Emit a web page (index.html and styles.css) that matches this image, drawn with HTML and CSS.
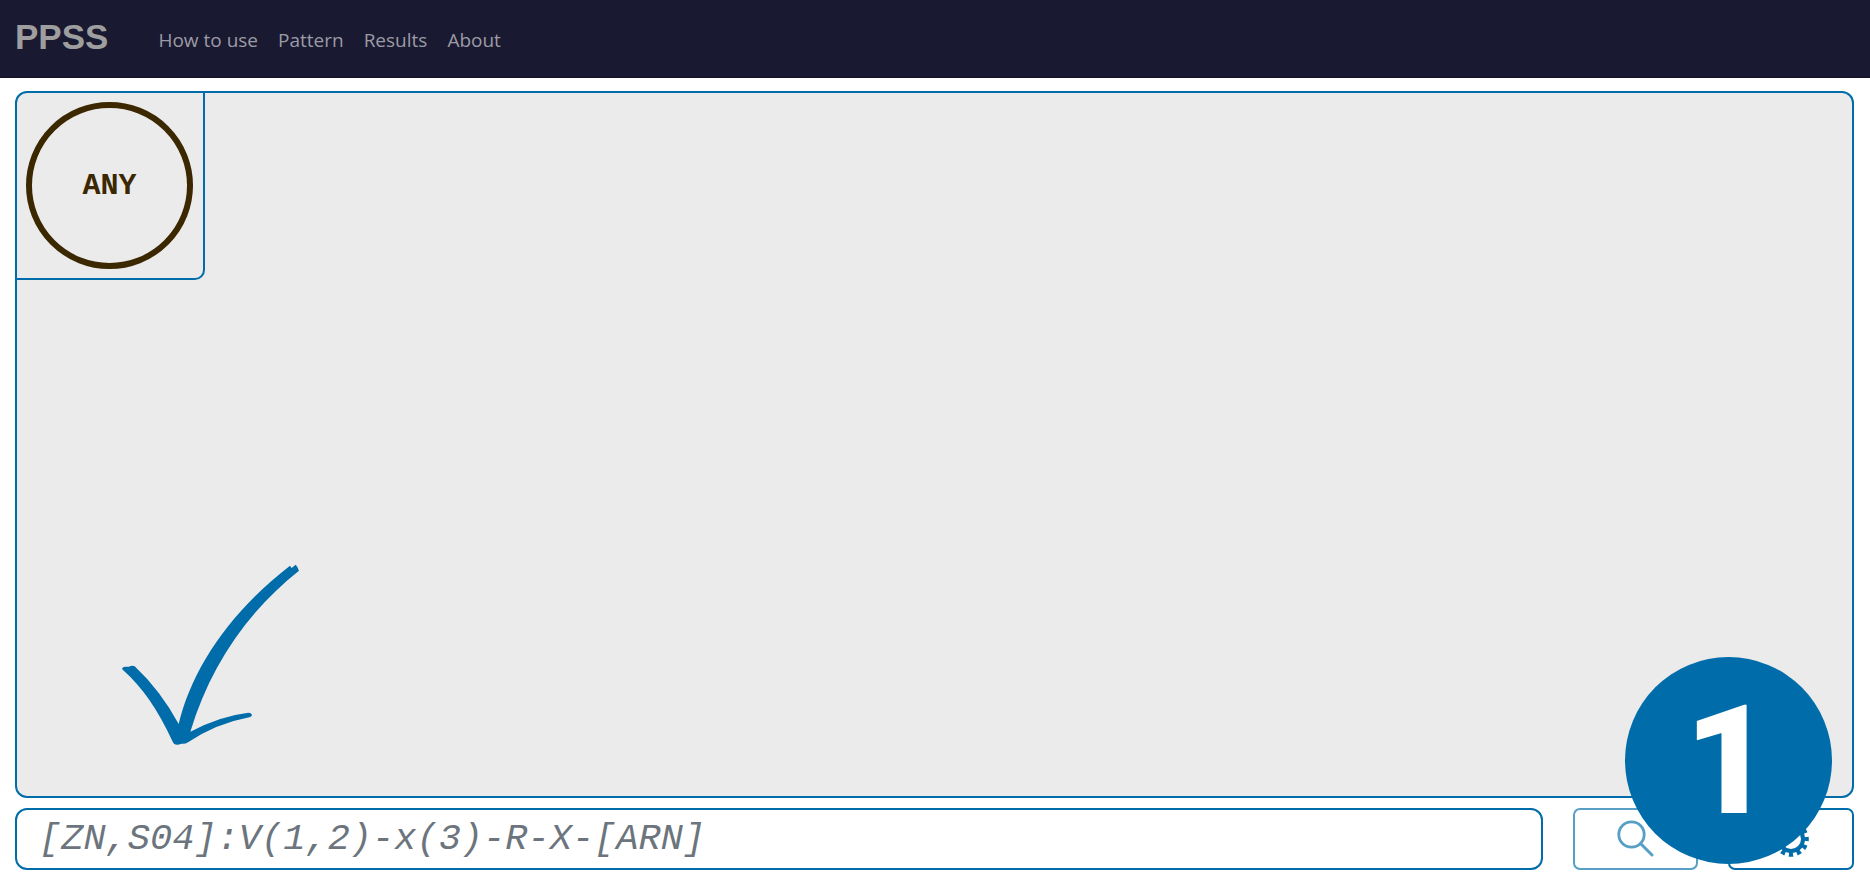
FILE: index.html
```html
<!DOCTYPE html>
<html lang="en">
<head>
<meta charset="utf-8">
<meta name="viewport" content="width=device-width, initial-scale=1">
<title>PPSS</title>
<link rel="stylesheet" href="styles.css">
</head>
<body>
<header class="navbar">
  <a class="brand" href="#">PPSS</a>
  <nav class="menu">
    <a href="#how-to-use">How to use</a>
    <a href="#pattern">Pattern</a>
    <a href="#results">Results</a>
    <a href="#about">About</a>
  </nav>
</header>
<main class="workspace">
  <section class="board" aria-label="Pattern board">
    <div class="slot"><div class="node">ANY</div></div>
    <svg class="arrow" viewBox="0 0 660 630" aria-hidden="true">
      <path d="M66 356 Q68 350 76 350 H87 Q96 345 104 349 Q180 420 236 522 C275 360 385 190 570 47 L575 54 L587 44 L592 51 L597 62 C442 185 330 350 271 545 Q360 498 445 488 Q455 489 456 495 Q455 500 448 502 Q350 520 264 577 Q255 583 244 581 Q230 587 222 581 Q219 578 217 573 C175 480 125 410 69 360 Z"/>
    </svg>
  </section>
  <form class="search-bar">
    <input class="pattern" type="text" aria-label="Pattern" placeholder="[ZN,S04]:V(1,2)-x(3)-R-X-[ARN]">
    <button class="tool" type="submit" aria-label="Search" disabled>
      <svg class="icon" viewBox="0 0 40 40" aria-hidden="true">
        <circle cx="15.5" cy="15.5" r="12.7" fill="none" stroke="currentColor" stroke-width="2.8"/>
        <path d="M24.5 24.5 36 36" fill="none" stroke="currentColor" stroke-width="3" stroke-linecap="round"/>
      </svg>
    </button>
    <button class="tool" type="button" aria-label="Settings">
      <svg class="icon" viewBox="0 0 40 40" aria-hidden="true">
        <circle cx="20" cy="20" r="12" fill="none" stroke="currentColor" stroke-width="4"/>
        <circle cx="20" cy="20" r="15.5" fill="none" stroke="currentColor" stroke-width="4.6" pathLength="120" stroke-dasharray="5.2 4.8" stroke-dashoffset="2.6"/>
      </svg>
    </button>
  </form>
  <div class="step">1</div>
</main>
</body>
</html>
```
FILE: styles.css
```css
* { box-sizing: border-box; }

:root {
  --blue: #006ca9;
  --navy: #1a1932;
}

body {
  margin: 0;
  min-height: 100vh;
  display: flex;
  flex-direction: column;
  background: #fff;
  font-family: "Open Sans", "Noto Sans", sans-serif;
}

.navbar {
  display: flex;
  align-items: center;
  gap: 50px;
  height: 78px;
  padding: 0 15px;
  background: var(--navy);
  border-bottom: 1px solid #111026;
}

.navbar a { text-decoration: none; }

.brand {
  padding-bottom: 4px;
  color: #9e9e9e;
  font: bold 35px/44px "Liberation Sans", Arial, sans-serif;
}

.menu {
  display: flex;
  gap: 20px;
  padding-top: 2px;
}

.menu a {
  color: #9c9ba5;
  font-size: 19px;
  line-height: 30px;
}

.workspace {
  position: relative;
  flex: 1;
  display: flex;
  flex-direction: column;
  gap: 10px;
  padding: 13px 16px 20px 15px;
}

.board {
  position: relative;
  flex: 1;
  background: #ebebeb;
  border: 2px solid var(--blue);
  border-radius: 12px;
}

.slot {
  width: 188px;
  padding: 9px 10px 9px 9px;
  border: solid var(--blue);
  border-width: 0 2px 2px 0;
  border-bottom-right-radius: 10px;
}

.node {
  display: grid;
  place-items: center;
  aspect-ratio: 1;
  border: 6px solid #3b2700;
  border-radius: 50%;
  color: #3b2700;
  font: bold 30px/36px "Liberation Mono", "Courier New", monospace;
}

.arrow {
  position: absolute;
  left: 83px;
  bottom: 36px;
  width: 220px;
  fill: var(--blue);
}

.search-bar {
  display: grid;
  grid-template-columns: 1fr 125px 126px;
  column-gap: 30px;
}

.pattern {
  min-width: 0;
  height: 62px;
  padding: 0 22px;
  border: 2px solid var(--blue);
  border-radius: 12px;
  background: #fff;
  color: #212529;
  font: italic 37px/44px "Liberation Mono", "Courier New", monospace;
}

.pattern::placeholder {
  color: #6c757d;
  opacity: 1;
}

.tool {
  display: grid;
  place-items: center;
  padding: 0;
  border: 2px solid var(--blue);
  border-radius: 7px;
  background: #fff;
  color: var(--blue);
}

.tool:disabled { opacity: 0.65; }

.icon {
  width: 40px;
  height: 40px;
}

.step {
  position: absolute;
  right: 38px;
  bottom: 26px;
  display: grid;
  place-items: center;
  width: 207px;
  height: 207px;
  border-radius: 50%;
  background: var(--blue);
  color: #fff;
  font: 900 152px/1 Roboto, "Open Sans", sans-serif;
}
```
